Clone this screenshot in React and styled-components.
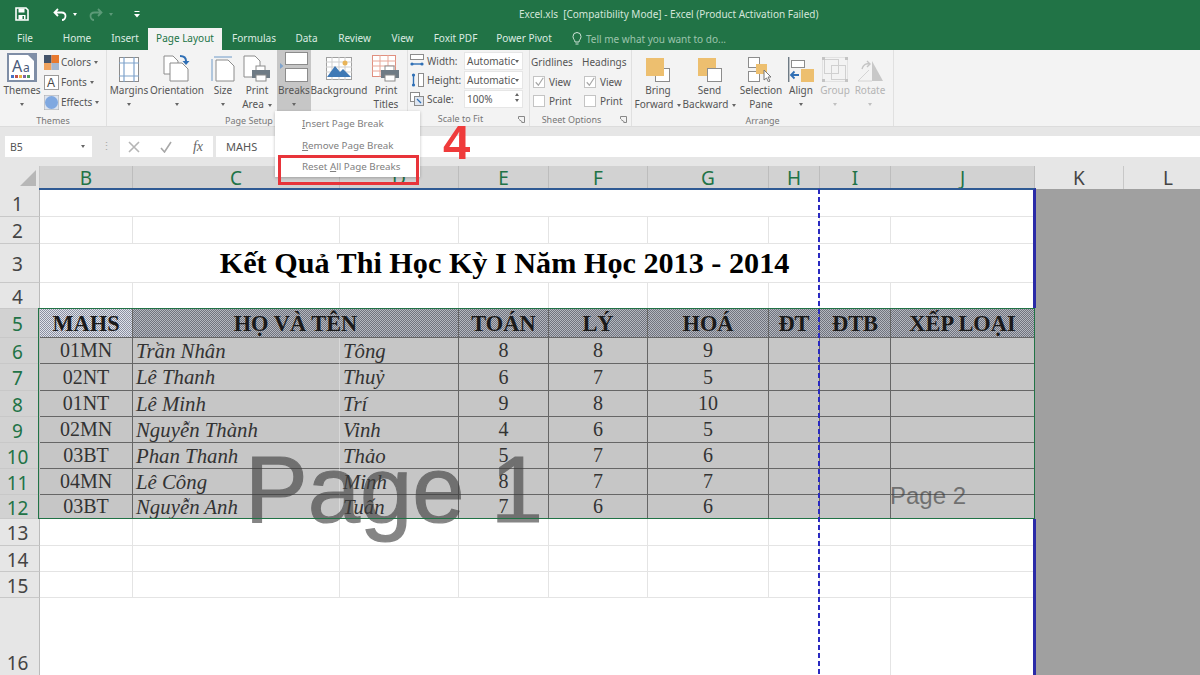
import React from "react";
import styled, { createGlobalStyle } from "styled-components";

const GlobalStyle = createGlobalStyle`
  html, body {
    margin: 0;
    padding: 0;
    background: #fff;
  }
`;

const uiFont = `"Noto Sans", "Open Sans", sans-serif`;
const cellFont = `"Liberation Serif", "Times New Roman", serif`;

// ---------- icons ----------

const SaveIcon = () => (
  <svg width="14" height="14" viewBox="0 0 14 14">
    <path d="M1 1h10l2 2v10H1z" fill="none" stroke="#fff" strokeWidth="1.6" />
    <rect x="3.5" y="1.5" width="6" height="4" fill="#fff" />
    <rect x="3.5" y="8" width="7" height="4.5" fill="#fff" />
    <rect x="7.5" y="9" width="1.5" height="3" fill="#217346" />
  </svg>
);

const UndoIcon = ({ $dim }) => (
  <svg width="14" height="13" viewBox="0 0 14 13" style={{ transform: $dim ? "scaleX(-1)" : "none" }}>
    <path
      d="M5 1L1.5 4.5 5 8M2 4.5h6.5c2.5 0 4 1.6 4 3.6S11 12 9 12"
      fill="none"
      stroke={$dim ? "#5c9a78" : "#fff"}
      strokeWidth="1.8"
    />
  </svg>
);

const CustomizeIcon = () => (
  <svg width="6" height="7" viewBox="0 0 6 7">
    <path d="M0.5 0.5h5" stroke="#fff" />
    <path d="M0 3h6L3 6.5z" fill="#fff" />
  </svg>
);

const ThemesIcon = () => (
  <svg width="30" height="29" viewBox="0 0 30 29">
    <rect x="0" y="0" width="30" height="29" fill="#7f8ea6" />
    <path d="M2 2h19l6 6v19H2z" fill="#fff" />
    <text x="5" y="19" fontFamily="Noto Sans" fontSize="16" fill="#4a5a7a">A</text>
    <text x="16" y="19" fontFamily="Noto Sans" fontSize="12" fill="#4a5a7a">a</text>
    <rect x="4" y="22" width="3" height="3" fill="#4472c4" />
    <rect x="8" y="22" width="3" height="3" fill="#c0504d" />
    <rect x="12" y="22" width="3" height="3" fill="#e8b33f" />
    <rect x="16" y="22" width="3" height="3" fill="#8064a2" />
    <rect x="20" y="22" width="3" height="3" fill="#4f9e5b" />
  </svg>
);

const ColorsIcon = () => (
  <svg width="15" height="15" viewBox="0 0 15 15">
    <rect x="0" y="0" width="7.5" height="8" fill="#44546a" />
    <rect x="7.5" y="0" width="7.5" height="8" fill="#e8792f" />
    <rect x="0" y="8" width="7.5" height="7" fill="#f0a35e" />
    <rect x="7.5" y="8" width="7.5" height="7" fill="#a5b6cf" />
  </svg>
);

const FontsIcon = () => (
  <svg width="15" height="15" viewBox="0 0 15 15">
    <rect x="0.5" y="0.5" width="14" height="14" fill="#fff" stroke="#9a9a9a" />
    <text x="3" y="12" fontFamily="Liberation Sans" fontSize="12" fill="#444">A</text>
  </svg>
);

const EffectsIcon = () => (
  <svg width="15" height="15" viewBox="0 0 15 15">
    <rect x="0" y="0" width="15" height="15" fill="#dce3ee" stroke="#a9a9a9" />
    <circle cx="7.5" cy="7.5" r="6.5" fill="#7fa8e0" />
  </svg>
);

const MarginsIcon = () => (
  <svg width="20" height="25" viewBox="0 0 20 25">
    <rect x="0.5" y="0.5" width="19" height="24" fill="#fff" stroke="#8c8c8c" />
    <path d="M5 0v25M15 0v25M0 6h20M0 19h20" stroke="#7fa3cc" strokeWidth="1.2" />
  </svg>
);

const OrientationIcon = () => (
  <svg width="28" height="27" viewBox="0 0 28 27">
    <path d="M1 1h9l5 5v13H1z" fill="#fff" stroke="#8c8c8c" />
    <path d="M7 8h12l6 6v12H7z" fill="#fff" stroke="#8c8c8c" />
    <path d="M17 1c4 0 6 2 6 5" fill="none" stroke="#2f6fb5" strokeWidth="2" />
    <path d="M19.5 6h7L23 10z" fill="#2f6fb5" />
  </svg>
);

const SizeIcon = () => (
  <svg width="24" height="26" viewBox="0 0 24 26">
    <path d="M5 4h12l6 6v15H5z" fill="#fff" stroke="#8c8c8c" />
    <path d="M1 3v22M3 1h18" stroke="#6f9ac8" strokeWidth="1" />
  </svg>
);

const PrintIcon = ({ $grid }) => (
  <svg width="28" height="27" viewBox="0 0 28 27">
    {$grid ? (
      <g>
        <rect x="0.5" y="0.5" width="23" height="21" fill="#fff" stroke="#e08f7f" />
        <path d="M0 6h24M0 11h24M0 16h24M8 0v22M16 0v22" stroke="#e8a798" />
      </g>
    ) : (
      <path d="M1 1h11l5 5v16H1z" fill="#fff" stroke="#8c8c8c" />
    )}
    <rect x="13" y="11" width="9" height="5" fill="#fff" stroke="#8c8c8c" />
    <rect x="9" y="15" width="18" height="8" fill="#6f7b85" />
    <rect x="13" y="20" width="10" height="6" fill="#fff" stroke="#8c8c8c" />
  </svg>
);

const BreaksIcon = () => (
  <svg width="28" height="30" viewBox="0 0 28 30">
    <rect x="5.5" y="0.5" width="22" height="12" fill="#fff" stroke="#8c8c8c" />
    <rect x="5.5" y="16.5" width="22" height="13" fill="#fff" stroke="#8c8c8c" />
    <path d="M0 11l3.5 3L0 17z" fill="#7fa3cc" />
  </svg>
);

const BackgroundIcon = () => (
  <svg width="26" height="25" viewBox="0 0 26 25">
    <rect x="0.5" y="0.5" width="25" height="22" fill="#fff" stroke="#a0a0a0" />
    <path d="M0 5h26M0 10h26M0 15h26M6 0v23M13 0v23M19 0v23" stroke="#cfcfcf" />
    <path d="M1 20l8-11 5 6 3-3 8 8z" fill="#3f79b5" />
    <circle cx="19" cy="6" r="2.5" fill="#e9b458" />
  </svg>
);

const ForwardIcon = ({ $back }) => (
  <svg width="24" height="24" viewBox="0 0 24 24">
    {$back ? (
      <g>
        <rect x="0" y="0" width="18" height="18" fill="#edbf6f" />
        <rect x="9.5" y="10.5" width="14" height="13" fill="#fff" stroke="#8c8c8c" />
      </g>
    ) : (
      <g>
        <rect x="9.5" y="10.5" width="14" height="13" fill="#fff" stroke="#8c8c8c" />
        <rect x="0" y="0" width="18" height="18" fill="#edbf6f" />
      </g>
    )}
  </svg>
);

const SelectionIcon = () => (
  <svg width="26" height="25" viewBox="0 0 26 25">
    <rect x="0.5" y="0.5" width="11" height="10" fill="#fff" stroke="#8c8c8c" />
    <rect x="0.5" y="14.5" width="11" height="10" fill="#fff" stroke="#8c8c8c" />
    <rect x="8" y="7" width="11" height="10" fill="#edbf6f" />
    <path d="M16 13v10l2.5-2 2 4 1.5-1-2-4h3z" fill="#fff" stroke="#777" />
  </svg>
);

const AlignIcon = () => (
  <svg width="26" height="25" viewBox="0 0 26 25">
    <path d="M0.7 0v25" stroke="#6f7b85" strokeWidth="1.4" />
    <rect x="3.5" y="3.5" width="13" height="7" fill="#fff" stroke="#8c8c8c" />
    <rect x="13" y="12" width="13" height="13" fill="#edbf6f" />
    <path d="M3 18h8M6.5 14.5L3 18l3.5 3.5" fill="none" stroke="#2f6fb5" strokeWidth="1.8" />
  </svg>
);

const GroupIcon = () => (
  <svg width="26" height="25" viewBox="0 0 26 25">
    <rect x="2.5" y="2.5" width="14" height="14" fill="none" stroke="#d0d0d0" />
    <rect x="9.5" y="8.5" width="14" height="14" fill="none" stroke="#d0d0d0" />
    <rect x="0.5" y="0.5" width="25" height="24" fill="none" stroke="#e2e2e2" />
    <path d="M0 0h3v3H0zM23 0h3v3h-3zM0 22h3v3H0zM23 22h3v3h-3z" fill="#c4c4c4" />
  </svg>
);

const RotateIcon = () => (
  <svg width="27" height="22" viewBox="0 0 27 22">
    <path d="M15 1l11 20H15z" fill="#c8c8c8" />
    <path d="M1 21L12 10M1 21h14" stroke="#d4d4d4" fill="none" />
    <path d="M5 9c1-4 4-6 8-5M10 1l3 3-3 3" fill="none" stroke="#c4c4c4" strokeWidth="1.4" />
  </svg>
);

const WidthIcon = () => (
  <svg width="14" height="14" viewBox="0 0 14 14">
    <rect x="0.5" y="0.5" width="13" height="5" fill="#fff" stroke="#8c8c8c" />
    <path d="M1 10h12" stroke="#2f6fb5" strokeWidth="1.4" />
    <circle cx="2" cy="10" r="1.6" fill="#2f6fb5" />
    <circle cx="12" cy="10" r="1.6" fill="#2f6fb5" />
  </svg>
);

const HeightIcon = () => (
  <svg width="14" height="14" viewBox="0 0 14 14">
    <rect x="8.5" y="0.5" width="5" height="13" fill="#fff" stroke="#8c8c8c" />
    <path d="M3.5 1v12" stroke="#2f6fb5" strokeWidth="1.4" />
    <circle cx="3.5" cy="2" r="1.6" fill="#2f6fb5" />
    <circle cx="3.5" cy="12" r="1.6" fill="#2f6fb5" />
  </svg>
);

const ScaleIcon = () => (
  <svg width="14" height="14" viewBox="0 0 14 14">
    <rect x="0.5" y="0.5" width="9" height="9" fill="#fff" stroke="#8c8c8c" />
    <rect x="4.5" y="4.5" width="9" height="9" fill="#dfe6f0" stroke="#8c8c8c" />
    <path d="M7 7l4 4" stroke="#2f6fb5" strokeWidth="1.2" />
  </svg>
);

const LauncherIcon = () => (
  <svg width="7" height="7" viewBox="0 0 7 7">
    <path d="M0.5 3V0.5H6.5V6.5H3.5M1 3.5L4.5 6" fill="none" stroke="#888" />
  </svg>
);

const BulbIcon = () => (
  <svg width="10" height="14" viewBox="0 0 10 14">
    <path d="M3 10C3 8 1 7 1 4.5a4 4 0 0 1 8 0C9 7 7 8 7 10zM3.5 12h3" fill="none" stroke="#cfe3d7" />
  </svg>
);

const CancelIcon = () => (
  <svg width="12" height="12" viewBox="0 0 12 12">
    <path d="M1 1l10 10M11 1L1 11" stroke="#b5b5b5" strokeWidth="1.6" />
  </svg>
);

const EnterIcon = ({ size = 12 }) => (
  <svg width={size} height={size} viewBox="0 0 12 12">
    <path d="M1 7l3.5 4L11 1" fill="none" stroke="#a8a8a8" strokeWidth="1.6" />
  </svg>
);

// ---------- title bar and tabs ----------

const Page = styled.div`
  position: relative;
  width: 1200px;
  height: 675px;
  overflow: hidden;
  display: flex;
  flex-direction: column;
  background: #e6e6e6;
  font-family: ${uiFont};
`;

const TitleBar = styled.div`
  position: relative;
  height: 28px;
  flex: none;
  background: #217346;
  display: flex;
  align-items: center;
  padding-left: 15px;
`;

const QuickTool = styled.span`
  display: flex;
  align-items: center;
  justify-content: center;
  margin-right: ${(p) => p.$gap}px;
`;

const WindowTitle = styled.div`
  position: absolute;
  left: 519px;
  top: 7px;
  font-size: 10px;
  line-height: 14px;
  color: #d4e6db;
  white-space: pre;
`;

const TabBar = styled.div`
  height: 22px;
  flex: none;
  background: #217346;
  display: flex;
  align-items: stretch;
`;

const Tab = styled.div`
  width: ${(p) => p.$w}px;
  margin-right: ${(p) => p.$mr || 0}px;
  text-align: center;
  font-size: 10px;
  line-height: 21px;
  color: ${(p) => (p.$active ? "#217346" : "#dcebe2")};
  background: ${(p) => (p.$active ? "#f3f3f3" : "transparent")};
`;

const TellMe = styled.div`
  display: flex;
  align-items: center;
  gap: 4px;
  margin-left: 12px;
  font-size: 10px;
  color: #9cc4ac;
`;

// ---------- ribbon ----------

const Ribbon = styled.div`
  height: 77px;
  flex: none;
  background: #f3f3f3;
  display: flex;
  border-bottom: 1px solid #dcdcdc;
  box-sizing: border-box;
`;

const Group = styled.div`
  position: relative;
  width: ${(p) => p.$w}px;
  flex: none;
  box-sizing: border-box;
  border-right: 1px solid #e0e0e0;
  display: flex;
  flex-direction: column;
`;

const GroupBody = styled.div`
  height: 61px;
  display: flex;
  padding-left: ${(p) => p.$pad || 0}px;
`;

const GroupLabel = styled.div`
  text-align: center;
  font-size: 9px;
  line-height: 14px;
  margin-top: 3px;
  padding-right: ${(p) => p.$shift || 0}px;
  color: #777;
`;

const Launcher = styled.span`
  position: absolute;
  right: 4px;
  bottom: 3px;
  display: flex;
`;

const BigButton = styled.div`
  width: ${(p) => p.$w}px;
  margin-left: ${(p) => p.$ml || 0}px;
  height: 61px;
  flex: none;
  display: flex;
  flex-direction: column;
  align-items: center;
  font-size: 10px;
  line-height: 14px;
  white-space: nowrap;
  color: ${(p) => (p.$off ? "#b4b4b4" : "#555")};
  background: ${(p) => (p.$open ? "#c6c6c6" : "transparent")};
`;

const IconSlot = styled.div`
  height: 32px;
  flex: none;
  display: flex;
  align-items: flex-end;
  justify-content: center;
  padding-bottom: 1px;
`;

const Caret = styled.span`
  display: inline-block;
  width: 0;
  height: 0;
  border-left: 2.5px solid transparent;
  border-right: 2.5px solid transparent;
  border-top: 3px solid ${(p) => p.$color || "#666"};
  vertical-align: middle;
  margin-left: ${(p) => p.$ml || 0}px;
`;

const CaretLine = styled.div`
  height: 14px;
  display: flex;
  align-items: center;
  justify-content: center;
`;

const SmallList = styled.div`
  display: flex;
  flex-direction: column;
  gap: 4px;
  padding-top: 4px;
  margin-left: 3px;
`;

const SmallItem = styled.div`
  display: flex;
  align-items: center;
  gap: 2px;
  height: 16px;
  font-size: 10px;
  color: #555;
`;

const ScaleRows = styled.div`
  display: flex;
  flex-direction: column;
  gap: 1px;
  padding: 2px 0 0 2px;
`;

const ScaleRow = styled.div`
  display: flex;
  align-items: center;
  height: 18px;
  font-size: 10px;
  color: #555;
`;

const ScaleName = styled.span`
  width: 37px;
  margin-left: 3px;
`;

const Field = styled.div`
  width: 59px;
  height: 18px;
  box-sizing: border-box;
  background: #fff;
  border: 1px solid #e6e6e6;
  display: flex;
  align-items: center;
  justify-content: ${(p) => (p.$right ? "center" : "space-between")};
  padding: 0 3px 0 2px;
  font-size: 10px;
  color: #555;
  overflow: hidden;
  position: relative;
`;

const Spinner = styled.span`
  position: absolute;
  right: 3px;
  top: 2px;
  display: flex;
  flex-direction: column;
  gap: 3px;
  font-size: 0;
`;

const SpinUp = styled(Caret)`
  border-top: 0;
  border-bottom: 3px solid #666;
`;

const OptionColumn = styled.div`
  width: ${(p) => p.$w}px;
  display: flex;
  flex-direction: column;
  padding-top: 4px;
  font-size: 10px;
  color: #555;
`;

const OptionHead = styled.div`
  height: 18px;
  line-height: 16px;
`;

const CheckRow = styled.div`
  height: 19px;
  display: flex;
  align-items: center;
  gap: 4px;
  padding-left: 2px;
`;

const CheckBox = styled.span`
  width: 12px;
  height: 12px;
  box-sizing: border-box;
  background: #fff;
  border: 1px solid #c4c4c4;
  display: flex;
  align-items: center;
  justify-content: center;
`;

// ---------- formula bar ----------

const FormulaBar = styled.div`
  flex: none;
  height: 39px;
  box-sizing: border-box;
  padding: 9px 0 9px 5px;
  display: flex;
  background: #e6e6e6;
`;

const NameBox = styled.div`
  width: 87px;
  background: #fff;
  display: flex;
  align-items: center;
  justify-content: space-between;
  padding: 0 7px 0 5px;
  box-sizing: border-box;
  font-size: 10.5px;
  color: #555;
`;

const Grip = styled.span`
  width: 28px;
  text-align: center;
  color: #aaa;
  font-size: 11px;
  line-height: 20px;
`;

const FormulaTools = styled.div`
  width: 93px;
  background: #fff;
  display: flex;
  align-items: center;
  justify-content: space-between;
  padding: 0 10px 0 8px;
  box-sizing: border-box;
  margin-right: 3px;
`;

const FxLabel = styled.span`
  font-family: ${cellFont};
  font-style: italic;
  font-size: 14px;
  color: #666;
`;

const FormulaInput = styled.div`
  flex: 1;
  background: #fff;
  padding-left: 10px;
  font-size: 11px;
  line-height: 21px;
  color: #555;
`;

// ---------- sheet ----------

const Sheet = styled.div`
  position: relative;
  flex: 1;
  min-height: 0;
  overflow: hidden;
  display: grid;
  grid-template-columns: 40px 93px 207px 119px 90px 99px 121px 51px 71px 144px 89px 89px;
  grid-template-rows: 23px 28px 27px 39px 26px 29px 26px 27px 26px 26px 26px 26px 24px 27px 26px 26px 78px;
  background: #fff;
`;

const Corner = styled.div`
  background: #e6e6e6;
  position: relative;
  border-right: 1px solid #c8c8c8;
  &::after {
    content: "";
    position: absolute;
    right: 3px;
    bottom: 3px;
    border-left: 16px solid transparent;
    border-bottom: 16px solid #b7b7b7;
  }
`;

const ColHead = styled.div`
  box-sizing: border-box;
  display: flex;
  align-items: center;
  justify-content: center;
  font-size: 19px;
  background: ${(p) => (p.$on ? "#d2d2d2" : "#e6e6e6")};
  color: ${(p) => (p.$on ? "#217346" : "#444")};
  border-right: 1px solid ${(p) => (p.$on ? "#bdbdbd" : "#c8c8c8")};
`;

const RowHead = styled.div`
  grid-column: 1;
  box-sizing: border-box;
  display: flex;
  align-items: ${(p) => (p.$tall ? "flex-end" : "center")};
  justify-content: center;
  font-size: 19px;
  padding: 2px 4px 0 0;
  line-height: 24px;
  background: ${(p) => (p.$on ? "#d2d2d2" : "#e6e6e6")};
  color: ${(p) => (p.$on ? "#217346" : "#444")};
  border-bottom: 1px solid #c8c8c8;
  border-right: 1px solid #bbb;
`;

const Cell = styled.div`
  box-sizing: border-box;
  min-width: 0;
  grid-column: ${(p) => (p.$span ? `span ${p.$span}` : "auto")};
  border-right: 1px solid ${(p) => (p.$on ? (p.$soft ? "#d8d8d8" : "#666") : p.$merged ? "transparent" : "#e4e4e4")};
  border-bottom: 1px solid ${(p) => (p.$on ? "#666" : "#e4e4e4")};
  background: ${(p) => (p.$on ? "#c6c6c6" : "#fff")};
  display: flex;
  align-items: center;
  justify-content: ${(p) => (p.$left ? "flex-start" : "center")};
  padding-left: ${(p) => (p.$left ? "3px" : "0")};
  font-family: ${cellFont};
  font-size: ${(p) => (p.$left ? "20.8px" : "20px")};
  font-style: ${(p) => (p.$left ? "italic" : "normal")};
  color: #333;
  white-space: nowrap;
`;

const TitleCell = styled(Cell)`
  padding-right: 65px;
  padding-top: 1px;
  font-size: 30.2px;
  font-weight: bold;
  color: #000;
`;

const HeadCell = styled(Cell)`
  padding-top: 2px;
  font-size: 22.4px;
  font-weight: bold;
  color: #1a1a1a;
  background: repeating-conic-gradient(
      ${(p) => (p.$light ? "#8a8fa0" : "#70737e")} 0 25%,
      ${(p) => (p.$light ? "#dfe2ea" : "#b4b7bf")} 0 50%
    )
    0 0 / 2px 2px;
`;

const OutsidePage = styled.div`
  grid-column: 11 / 13;
  grid-row: 2 / -1;
  background: #a0a0a0;
`;

const PageEdge = styled.div`
  position: absolute;
  left: 39px;
  top: ${(p) => p.$top}px;
  height: ${(p) => p.$h}px;
  width: 997px;
  box-sizing: border-box;
  border-top: ${(p) => (p.$cap ? "2px solid #2f5a94" : "0")};
  border-right: 3px solid #2a2aa8;
  pointer-events: none;
`;

const PageBreak = styled.div`
  position: absolute;
  left: 818px;
  top: 23px;
  bottom: 0;
  width: 2px;
  background: repeating-linear-gradient(to bottom, #2a2ac0 0 5px, transparent 5px 8px);
`;

const SelectionBox = styled.div`
  position: absolute;
  left: 38px;
  top: 142px;
  width: 997px;
  height: 211px;
  box-sizing: border-box;
  border: 1px solid #217346;
  pointer-events: none;
`;

const Watermark = styled.div`
  position: absolute;
  left: ${(p) => p.$x}px;
  top: ${(p) => p.$y}px;
  font-family: "Liberation Sans", Arial, sans-serif;
  font-size: ${(p) => p.$size}px;
  -webkit-text-stroke: ${(p) => p.$stroke || 0}px #3c3c3c;
  line-height: 1;
  color: #3c3c3c;
  opacity: 0.62;
  white-space: nowrap;
  pointer-events: none;
`;

// ---------- breaks menu ----------

const Menu = styled.div`
  position: absolute;
  left: 275px;
  top: 111px;
  width: 145px;
  height: 66px;
  background: #fff;
  box-shadow: 0 1px 3px rgba(0, 0, 0, 0.25);
  padding-top: 3px;
  box-sizing: border-box;
`;

const MenuItem = styled.div`
  height: 21.5px;
  line-height: 20px;
  padding-left: 27px;
  font-size: 9.8px;
  color: #808080;
  white-space: nowrap;
`;

const RedBox = styled.div`
  position: absolute;
  left: 278px;
  top: 155px;
  width: 141px;
  height: 30px;
  box-sizing: border-box;
  border: 3px solid #e8343a;
`;

const StepNumber = styled.div`
  position: absolute;
  left: 443px;
  top: 118px;
  font-family: "Liberation Sans", Arial, sans-serif;
  font-weight: bold;
  font-size: 49px;
  line-height: 48px;
  color: #ef3b3b;
`;

// ---------- data ----------

const columns = ["B", "C", "D", "E", "F", "G", "H", "I", "J"];

const students = [
  ["01MN", "Trần Nhân", "Tông", "8", "8", "9"],
  ["02NT", "Lê Thanh", "Thuỷ", "6", "7", "5"],
  ["01NT", "Lê Minh", "Trí", "9", "8", "10"],
  ["02MN", "Nguyễn Thành", "Vinh", "4", "6", "5"],
  ["03BT", "Phan Thanh", "Thảo", "5", "7", "6"],
  ["04MN", "Lê Công", "Minh", "8", "7", "7"],
  ["03BT", "Nguyễn Anh", "Tuấn", "7", "6", "6"],
];

const BlankRow = () => columns.map((c) => <Cell key={c} />);

// drop: "line" puts the arrow under the label, "inline" after the last line
const Big = ({ w, ml, icon, off, open, lines, drop }) => (
  <BigButton $w={w} $ml={ml} $off={off} $open={open}>
    <IconSlot>{icon}</IconSlot>
    {lines.map((l, i) => (
      <div key={l}>
        {l}
        {drop === "inline" && i === lines.length - 1 && <Caret $ml={4} />}
      </div>
    ))}
    {drop === "line" && (
      <CaretLine>
        <Caret $color={off ? "#c0c0c0" : "#666"} />
      </CaretLine>
    )}
  </BigButton>
);

export default function App() {
  return (
    <Page>
      <GlobalStyle />
      <TitleBar>
        <QuickTool $gap={24}>
          <SaveIcon />
        </QuickTool>
        <QuickTool $gap={4}>
          <UndoIcon />
        </QuickTool>
        <QuickTool $gap={12}>
          <Caret $ml={2} $color="#fff" />
        </QuickTool>
        <QuickTool $gap={4}>
          <UndoIcon $dim />
        </QuickTool>
        <QuickTool $gap={21}>
          <Caret $ml={2} $color="#5c9a78" />
        </QuickTool>
        <QuickTool $gap={0}>
          <CustomizeIcon />
        </QuickTool>
        <WindowTitle>Excel.xls  [Compatibility Mode] - Excel (Product Activation Failed)</WindowTitle>
      </TitleBar>

      <TabBar>
        <Tab $w={50}>File</Tab>
        <Tab $w={54}>Home</Tab>
        <Tab $w={42} $mr={2}>Insert</Tab>
        <Tab $w={74} $active>Page Layout</Tab>
        <Tab $w={64}>Formulas</Tab>
        <Tab $w={41}>Data</Tab>
        <Tab $w={55}>Review</Tab>
        <Tab $w={41}>View</Tab>
        <Tab $w={65}>Foxit PDF</Tab>
        <Tab $w={72}>Power Pivot</Tab>
        <TellMe>
          <BulbIcon />
          Tell me what you want to do...
        </TellMe>
      </TabBar>

      <Ribbon>
        <Group $w={107}>
          <GroupBody $pad={3}>
            <Big w={38} icon={<ThemesIcon />} lines={["Themes"]} drop="line" />
            <SmallList>
              <SmallItem>
                <ColorsIcon />
                Colors
                <Caret $ml={1} />
              </SmallItem>
              <SmallItem>
                <FontsIcon />
                Fonts
                <Caret $ml={1} />
              </SmallItem>
              <SmallItem>
                <EffectsIcon />
                Effects
                <Caret $ml={1} />
              </SmallItem>
            </SmallList>
          </GroupBody>
          <GroupLabel>Themes</GroupLabel>
        </Group>

        <Group $w={301}>
          <GroupBody $pad={3}>
            <Big w={38} icon={<MarginsIcon />} lines={["Margins"]} drop="line" />
            <Big w={54} ml={2} icon={<OrientationIcon />} lines={["Orientation"]} drop="line" />
            <Big w={26} ml={6} icon={<SizeIcon />} lines={["Size"]} drop="line" />
            <Big w={34} ml={4} icon={<PrintIcon />} lines={["Print", "Area"]} drop="inline" />
            <Big w={34} ml={3} open icon={<BreaksIcon />} lines={["Breaks"]} drop="line" />
            <Big w={56} icon={<BackgroundIcon />} lines={["Background"]} />
            <Big w={34} ml={2} icon={<PrintIcon $grid />} lines={["Print", "Titles"]} />
          </GroupBody>
          <GroupLabel $shift={16}>Page Setup</GroupLabel>
        </Group>

        <Group $w={122}>
          <GroupBody>
            <ScaleRows>
              <ScaleRow>
                <WidthIcon />
                <ScaleName>Width:</ScaleName>
                <Field>
                  Automatic
                  <Caret />
                </Field>
              </ScaleRow>
              <ScaleRow>
                <HeightIcon />
                <ScaleName>Height:</ScaleName>
                <Field>
                  Automatic
                  <Caret />
                </Field>
              </ScaleRow>
              <ScaleRow>
                <ScaleIcon />
                <ScaleName>Scale:</ScaleName>
                <Field>
                  100%
                  <Spinner>
                    <SpinUp />
                    <Caret />
                  </Spinner>
                </Field>
              </ScaleRow>
            </ScaleRows>
          </GroupBody>
          <GroupLabel $shift={16}>Scale to Fit</GroupLabel>
          <Launcher>
            <LauncherIcon />
          </Launcher>
        </Group>

        <Group $w={102}>
          <GroupBody $pad={1}>
            <OptionColumn $w={51}>
              <OptionHead>Gridlines</OptionHead>
              <CheckRow>
                <CheckBox>
                  <EnterIcon size={9} />
                </CheckBox>
                View
              </CheckRow>
              <CheckRow>
                <CheckBox />
                Print
              </CheckRow>
            </OptionColumn>
            <OptionColumn $w={46}>
              <OptionHead>Headings</OptionHead>
              <CheckRow>
                <CheckBox>
                  <EnterIcon size={9} />
                </CheckBox>
                View
              </CheckRow>
              <CheckRow>
                <CheckBox />
                Print
              </CheckRow>
            </OptionColumn>
          </GroupBody>
          <GroupLabel $shift={18}>Sheet Options</GroupLabel>
          <Launcher>
            <LauncherIcon />
          </Launcher>
        </Group>

        <Group $w={262}>
          <GroupBody $pad={1}>
            <Big w={50} icon={<ForwardIcon />} lines={["Bring", "Forward"]} drop="inline" />
            <Big w={53} icon={<ForwardIcon $back />} lines={["Send", "Backward"]} drop="inline" />
            <Big w={46} ml={2} icon={<SelectionIcon />} lines={["Selection", "Pane"]} />
            <Big w={30} ml={2} icon={<AlignIcon />} lines={["Align"]} drop="line" />
            <Big w={32} ml={3} off icon={<GroupIcon />} lines={["Group"]} drop="line" />
            <Big w={32} ml={3} off icon={<RotateIcon />} lines={["Rotate"]} drop="line" />
          </GroupBody>
          <GroupLabel>Arrange</GroupLabel>
        </Group>
      </Ribbon>

      <FormulaBar>
        <NameBox>
          B5
          <Caret />
        </NameBox>
        <Grip>⋮</Grip>
        <FormulaTools>
          <CancelIcon />
          <EnterIcon />
          <FxLabel>fx</FxLabel>
        </FormulaTools>
        <FormulaInput>MAHS</FormulaInput>
      </FormulaBar>

      <Sheet>
        <Corner />
        {columns.map((c) => (
          <ColHead key={c} $on>
            {c}
          </ColHead>
        ))}
        <ColHead>K</ColHead>
        <ColHead>L</ColHead>

        <OutsidePage />

        <RowHead>1</RowHead>
        <Cell $span={9} $merged />
        <RowHead>2</RowHead>
        <BlankRow />
        <RowHead>3</RowHead>
        <TitleCell $span={9} $merged>Kết Quả Thi Học Kỳ I Năm Học 2013 - 2014</TitleCell>
        <RowHead>4</RowHead>
        <BlankRow />

        <RowHead $on>5</RowHead>
        <HeadCell $on $light>MAHS</HeadCell>
        <HeadCell $on $span={2}>HỌ VÀ TÊN</HeadCell>
        <HeadCell $on>TOÁN</HeadCell>
        <HeadCell $on>LÝ</HeadCell>
        <HeadCell $on>HOÁ</HeadCell>
        <HeadCell $on>ĐT</HeadCell>
        <HeadCell $on>ĐTB</HeadCell>
        <HeadCell $on>XẾP LOẠI</HeadCell>

        {students.map((s, i) => (
          <React.Fragment key={s[1]}>
            <RowHead $on>{i + 6}</RowHead>
            <Cell $on>{s[0]}</Cell>
            <Cell $on $left $soft>{s[1]}</Cell>
            <Cell $on $left>{s[2]}</Cell>
            <Cell $on>{s[3]}</Cell>
            <Cell $on>{s[4]}</Cell>
            <Cell $on>{s[5]}</Cell>
            <Cell $on />
            <Cell $on />
            <Cell $on />
          </React.Fragment>
        ))}

        {[13, 14, 15].map((n) => (
          <React.Fragment key={n}>
            <RowHead>{n}</RowHead>
            <BlankRow />
          </React.Fragment>
        ))}
        <RowHead $tall>16</RowHead>
        <Cell $span={8} />
        <Cell />

        <Watermark $x={245} $y={277} $size={94} $stroke={1.2}>Page 1</Watermark>
        <Watermark $x={890} $y={318} $size={24}>Page 2</Watermark>
        <SelectionBox />
        <PageEdge $top={22} $h={120} $cap />
        <PageEdge $top={353} $h={160} />
        <PageBreak />
      </Sheet>

      <Menu>
        <MenuItem><u>I</u>nsert Page Break</MenuItem>
        <MenuItem><u>R</u>emove Page Break</MenuItem>
        <MenuItem>Reset <u>A</u>ll Page Breaks</MenuItem>
      </Menu>
      <RedBox />
      <StepNumber>4</StepNumber>
    </Page>
  );
}
